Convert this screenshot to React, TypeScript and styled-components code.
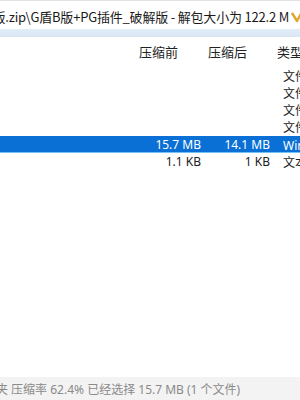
import { createGlobalStyle } from "styled-components";
import styled from "styled-components";

const GlobalStyle = createGlobalStyle`
  html, body {
    margin: 0;
    padding: 0;
    background: #fff;
    overflow: hidden;
  }
  body {
    font-family: "Noto Sans CJK SC", "Noto Sans", sans-serif;
  }
`;

interface FileRow {
  packed?: string;
  unpacked?: string;
  type: string;
  selected?: boolean;
}

const rows: FileRow[] = [
  { type: "文件夹" },
  { type: "文件夹" },
  { type: "文件夹" },
  { type: "文件夹" },
  { packed: "15.7 MB", unpacked: "14.1 MB", type: "WinRAR ZIP 压缩文件", selected: true },
  { packed: "1.1 KB", unpacked: "1 KB", type: "文本文档" },
];

const Window = styled.div`
  width: 300px;
  height: 400px;
  display: flex;
  flex-direction: column;
  overflow: hidden;
  color: #1e1e1e;
`;

const AddressBar = styled.div`
  height: 29px;
  box-sizing: border-box;
  padding-top: 2px;
  border-top: 1px solid #e2e2e2;
  display: flex;
  align-items: center;
  justify-content: flex-end;
  overflow: hidden;
  background: #fff;
`;

const PathText = styled.span`
  flex-shrink: 0;
  white-space: nowrap;
  font-size: 13px;
  letter-spacing: -0.2px;
  color: #1a1a1a;
  margin-right: 2px;
`;

const DropIcon = styled.svg`
  flex-shrink: 0;
  width: 13px;
  height: 14px;
  margin-right: -4px;
`;

const Band = styled.div`
  height: 8px;
  background: linear-gradient(#e4edf8, #d8e6f4);
`;

const Columns = styled.div`
  display: grid;
  grid-template-columns: 134px 70px 69px 1fr;
  white-space: nowrap;
`;

const Header = styled(Columns)`
  height: 28px;
  align-items: center;
  font-size: 13px;
  color: #222;
`;

const HeaderCell = styled.div<{ $pad: number }>`
  padding-left: ${(p) => p.$pad}px;
`;

const List = styled.div`
  flex: 1;
  padding-top: 3px;
`;

const Row = styled(Columns)<{ $selected?: boolean }>`
  height: 17px;
  box-sizing: border-box;
  align-items: center;
  font-size: 12px;
  font-family: "Noto Sans", "Noto Sans CJK SC", sans-serif;
  color: ${(p) => (p.$selected ? "#fff" : "#222")};
  background: ${(p) => (p.$selected ? "#0a70d6" : "transparent")};
  border-bottom: 1px solid ${(p) => (p.$selected ? "#74c0f2" : "transparent")};
`;

const SizeCell = styled.div`
  text-align: right;
  padding-right: 3px;
`;

const TypeCell = styled.div`
  padding-left: 10px;
  overflow: hidden;
`;

const StatusBar = styled.div`
  height: 23px;
  background: #f3f3f3;
  display: flex;
  align-items: center;
  overflow: hidden;
  white-space: nowrap;
  font-size: 12px;
  font-family: "Noto Sans", "Noto Sans CJK SC", sans-serif;
  color: #8a8a8a;
`;

const StatusText = styled.span`
  margin-left: -4px;
`;

export default function App() {
  return (
    <>
      <GlobalStyle />
      <Window>
        <AddressBar>
          <PathText>破解版.zip\G盾B版+PG插件_破解版 - 解包大小为 122.2 M</PathText>
          <DropIcon viewBox="0 0 13 14">
            <path d="M1 4 L6 12 L12 1" fill="none" stroke="#e2a52a" strokeWidth="2.4" strokeLinejoin="round" />
          </DropIcon>
        </AddressBar>
        <Band />
        <Header>
          <HeaderCell $pad={0} />
          <HeaderCell $pad={5}>压缩前</HeaderCell>
          <HeaderCell $pad={4}>压缩后</HeaderCell>
          <HeaderCell $pad={4}>类型</HeaderCell>
        </Header>
        <List>
          {rows.map((r, i) => (
            <Row key={i} $selected={r.selected}>
              <div />
              <SizeCell>{r.packed}</SizeCell>
              <SizeCell>{r.unpacked}</SizeCell>
              <TypeCell>{r.type}</TypeCell>
            </Row>
          ))}
        </List>
        <StatusBar>
          <StatusText>夹 压缩率 62.4% 已经选择 15.7 MB (1 个文件)</StatusText>
        </StatusBar>
      </Window>
    </>
  );
}
